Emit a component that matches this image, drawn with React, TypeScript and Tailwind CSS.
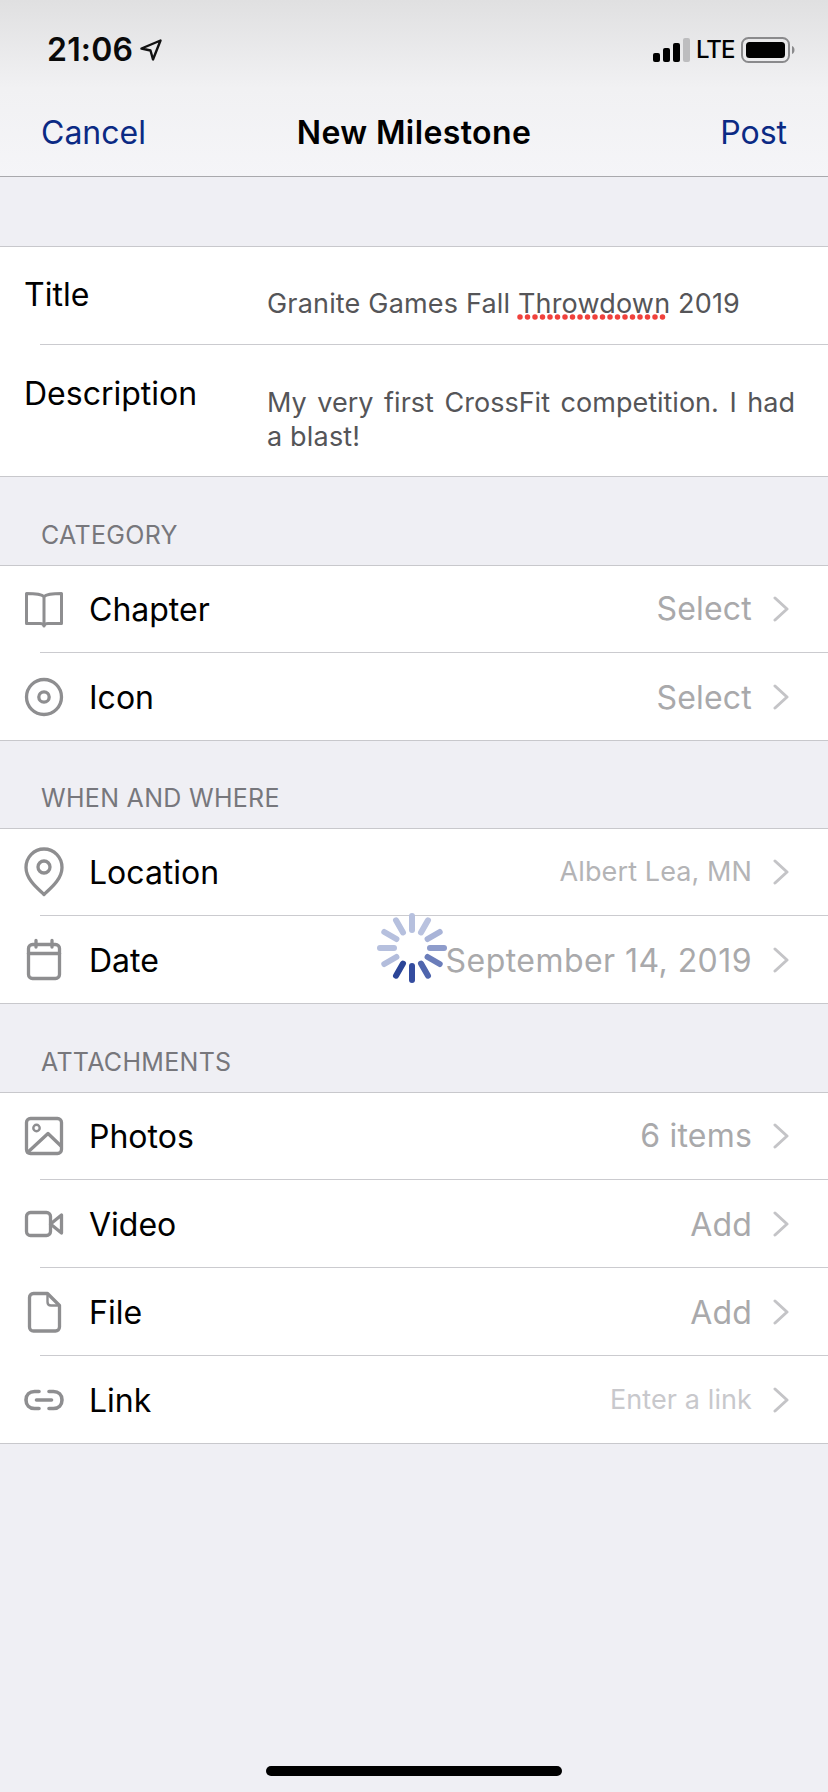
import React from 'react';

const FONT = "font-['Inter','Noto_Sans',sans-serif]";

const IconFrame = ({ children }: { children: React.ReactNode }) => (
  <svg width="40" height="50" viewBox="0 0 40 50" fill="none" stroke="#8e8e90" strokeWidth="3.300" strokeLinejoin="round" strokeLinecap="round" className="shrink-0">
    {children}
  </svg>
);

const BookIcon = () => (
  <IconFrame>
    <path d="M20 12.500C17 9.500 7 9.500 2.500 9.500V39.500H16C18 39.500 19.500 40 20 41.500C20.500 40 22 39.500 24 39.500H37.500V9.500C33 9.500 23 9.500 20 12.500Z" strokeWidth="3" />
    <path d="M20 12.500V42" strokeWidth="3" />
  </IconFrame>
);

const TargetIcon = () => (
  <IconFrame>
    <circle cx="20" cy="25" r="17.500" />
    <circle cx="20" cy="25" r="5.200" />
  </IconFrame>
);

const PinIcon = () => (
  <IconFrame>
    <path d="M20 47.500C15 42.500 2 33 2 20.500C2 10 10 2 20 2C30 2 38 10 38 20.500C38 33 25 42.500 20 47.500Z" />
    <circle cx="20" cy="20" r="6" />
  </IconFrame>
);

const CalendarIcon = () => (
  <IconFrame>
    <rect x="4.500" y="9.500" width="31" height="34" rx="4" />
    <path d="M4.500 18.500H35.500" />
    <path d="M12 5.500V12M28 5.500V12" />
  </IconFrame>
);

const PhotoIcon = () => (
  <IconFrame>
    <rect x="2.500" y="7.500" width="35" height="35" rx="4" />
    <circle cx="12.500" cy="17" r="3.200" strokeWidth="2.400" />
    <path d="M3.500 41.500L24 22.500L37 35" />
  </IconFrame>
);

const VideoIcon = () => (
  <IconFrame>
    <rect x="2.500" y="13.500" width="24" height="23" rx="4" />
    <path d="M26.500 25L37.500 16V34L26.500 25Z" />
  </IconFrame>
);

const FileIcon = () => (
  <IconFrame>
    <path d="M9.500 6.500H23.500L35.500 18.500V40C35.500 42.500 33.500 44 31.500 44H9.500C7 44 5.500 42.500 5.500 40V10.500C5.500 8 7 6.500 9.500 6.500Z" />
    <path d="M23.500 7V15C23.500 17.500 25 18.500 27 18.500H35" strokeWidth="2.400" />
  </IconFrame>
);

const LinkIcon = () => (
  <IconFrame>
    <path d="M15 16.500H10.500C5.500 16.500 2 20 2 25C2 30 5.500 33.500 10.500 33.500H15" strokeWidth="3.600" />
    <path d="M25 16.500H29.500C34.500 16.500 38 20 38 25C38 30 34.500 33.500 29.500 33.500H25" strokeWidth="3.600" />
    <path d="M12.500 25H27.500" strokeWidth="3.600" />
  </IconFrame>
);

const Chevron = () => (
  <svg width="16" height="26" viewBox="0 0 16 26" fill="none" stroke="#c4c4c7" strokeWidth="3" strokeLinecap="round" strokeLinejoin="round" className="shrink-0">
    <path d="M2 2L14 13L2 24" />
  </svg>
);

const Spinner = () => {
  // 12 spokes, clockwise from 12 o'clock
  const colors = ['#b6c0de', '#b9c2df', '#a9b4d8', '#8e9ccb', '#6b7dba', '#4f65ad', '#344c9f', '#2b4598', '#b3bddc', '#b6c0de', '#b6c0de', '#b6c0de'];
  return (
    <svg width="80" height="80" viewBox="-40 -40 80 80" className="absolute left-[372px] top-[908px]">
      {colors.map((c, i) => (
        <line key={i} x1="0" y1="-18" x2="0" y2="-32" stroke={c} strokeWidth="6" strokeLinecap="round" transform={`rotate(${i * 30})`} />
      ))}
    </svg>
  );
};

const StatusBar = () => (
  <div className="h-[88px] flex items-start justify-between pt-[30px] pl-[47px] pr-[33px]">
    <div className="flex items-center gap-[7px]">
      <span className="text-[32px] leading-[40px] font-semibold text-[#0a0a0a] tracking-[0.2px]">21:06</span>
      <svg width="22" height="22" viewBox="0 0 22 22" fill="none" stroke="#111" strokeWidth="2.400" strokeLinejoin="round">
        <path d="M1.500 9.500L20.500 1.500L13 20.500L10.500 11.500L1.500 9.500Z" />
      </svg>
    </div>
    <div className="flex items-center gap-[6px] h-[40px]">
      <svg width="37" height="24" viewBox="0 0 37 24">
        <rect x="0" y="15" width="7" height="9" rx="2" fill="#000" />
        <rect x="10" y="10" width="7" height="14" rx="2" fill="#000" />
        <rect x="20" y="5" width="7" height="19" rx="2" fill="#000" />
        <rect x="30" y="0" width="7" height="24" rx="2" fill="#bdbdbf" />
      </svg>
      <span className="w-[37px] text-[24px] leading-[40px] font-medium text-black tracking-[-1px]">LTE</span>
      <svg width="54" height="26" viewBox="0 0 54 26" className="ml-[2px]">
        <rect x="1" y="1" width="47" height="24" rx="6.500" fill="none" stroke="#8a8a8c" strokeWidth="2" />
        <rect x="5" y="5" width="39" height="16" rx="3.500" fill="#000" />
        <path d="M51 9C52.500 9.500 53.500 11 53.500 13C53.500 15 52.500 16.500 51 17Z" fill="#8a8a8c" />
      </svg>
    </div>
  </div>
);

const NavBar = () => (
  <div className="relative h-[89px] flex items-start justify-between pt-[25px] px-[41px] border-b border-[#a9a9ad]">
    <span className="text-[32px] leading-[40px] text-[#0b2a84]">Cancel</span>
    <span className="absolute left-0 right-0 top-[25px] text-center text-[32px] leading-[40px] font-semibold text-black tracking-[0.4px]">New Milestone</span>
    <span className="text-[32px] leading-[40px] text-[#0b2a84]">Post</span>
  </div>
);

const Row = ({ icon, label, value, valueClass, first }: { icon: React.ReactNode; label: string; value: string; valueClass: string; first?: boolean }) => (
  <div className={`flex items-center pl-[24px] pr-[39px] ${first ? 'h-[86px]' : 'h-[87px]'}`}>
    {icon}
    <span className="ml-[25px] pt-[2px] text-[32px] text-black">{label}</span>
    <span className={`ml-auto mr-[21px] ${first ? '' : 'pt-[2px]'} ${valueClass}`}>{value}</span>
    <Chevron />
  </div>
);

const Sep = () => <div className="ml-[40px] h-px bg-[#cbcbcf]" />;

const SectionLabel = ({ text, h }: { text: string; h: string }) => (
  <div className={`${h} flex items-end pl-[41px] pb-[14px] text-[25px] leading-[32px] text-[#77777c] tracking-[0.3px]`}>{text}</div>
);

const VALUE = 'text-[32px] text-[#a9a9ab] tracking-[0.2px]';
const SMALL = 'text-[27px] tracking-[0.1px]';

export default function App() {
  return (
    <div className={`relative min-h-[1792px] w-[828px] flex flex-col bg-[#efeff4] ${FONT}`}>
      <div className="bg-gradient-to-b from-[#e0e0e1] via-[#f1f1f3] via-50% to-[#f5f5f8]">
        <StatusBar />
        <NavBar />
      </div>

      <div className="h-[69px]" />

      {/* Title + description */}
      <div className="bg-white border-y border-[#c8c8cc]">
        <div className="h-[97px] flex items-start pl-[24px] pr-[33px]">
          <span className="w-[243px] pt-[28px] text-[32px] leading-[40px] text-black">Title</span>
          <span className="pt-[40px] text-[27px] leading-[34px] text-[#555558] tracking-[0.18px]">
            Granite Games Fall{' '}
            <span className="relative">
              Throwdown
              <svg width="156" height="8" viewBox="0 0 156 8" className="absolute -left-[1px] top-[26px]">
                <line x1="3" y1="4" x2="153" y2="4" stroke="#f0413c" strokeWidth="5.500" strokeLinecap="round" strokeDasharray="0 7.500" />
              </svg>
            </span>{' '}
            2019
          </span>
        </div>
        <Sep />
        <div className="h-[131px] flex items-start pl-[24px] pr-[33px]">
          <span className="w-[243px] pt-[29px] text-[32px] leading-[40px] text-black">Description</span>
          <div className="w-[528px] pt-[41px] text-[27px] leading-[34px] text-[#555558]">
            <p className="[text-align-last:justify]">My very first CrossFit competition. I had</p>
            <p className="tracking-[0.18px]">a blast!</p>
          </div>
        </div>
      </div>

      <SectionLabel text="CATEGORY" h="h-[88px]" />
      <div className="bg-white border-y border-[#c8c8cc]">
        <Row first icon={<BookIcon />} label="Chapter" value="Select" valueClass={VALUE} />
        <Sep />
        <Row icon={<TargetIcon />} label="Icon" value="Select" valueClass={VALUE} />
      </div>

      <SectionLabel text="WHEN AND WHERE" h="h-[87px]" />
      <div className="bg-white border-y border-[#c8c8cc]">
        <Row first icon={<PinIcon />} label="Location" value="Albert Lea, MN" valueClass={`${SMALL} text-[#b4b4b6]`} />
        <Sep />
        <Row icon={<CalendarIcon />} label="Date" value="September 14, 2019" valueClass="text-[32px] text-[#a9a9ab] tracking-[0.45px]" />
      </div>

      <SectionLabel text="ATTACHMENTS" h="h-[88px]" />
      <div className="bg-white border-y border-[#c8c8cc]">
        <Row first icon={<PhotoIcon />} label="Photos" value="6 items" valueClass={VALUE} />
        <Sep />
        <Row icon={<VideoIcon />} label="Video" value="Add" valueClass={VALUE} />
        <Sep />
        <Row icon={<FileIcon />} label="File" value="Add" valueClass={VALUE} />
        <Sep />
        <Row icon={<LinkIcon />} label="Link" value="Enter a link" valueClass={`${SMALL} text-[#c8c8cc]`} />
      </div>

      <div className="flex-1 flex items-end justify-center pb-[16px]">
        <div className="w-[296px] h-[10px] rounded-full bg-black" />
      </div>

      <Spinner />
    </div>
  );
}
